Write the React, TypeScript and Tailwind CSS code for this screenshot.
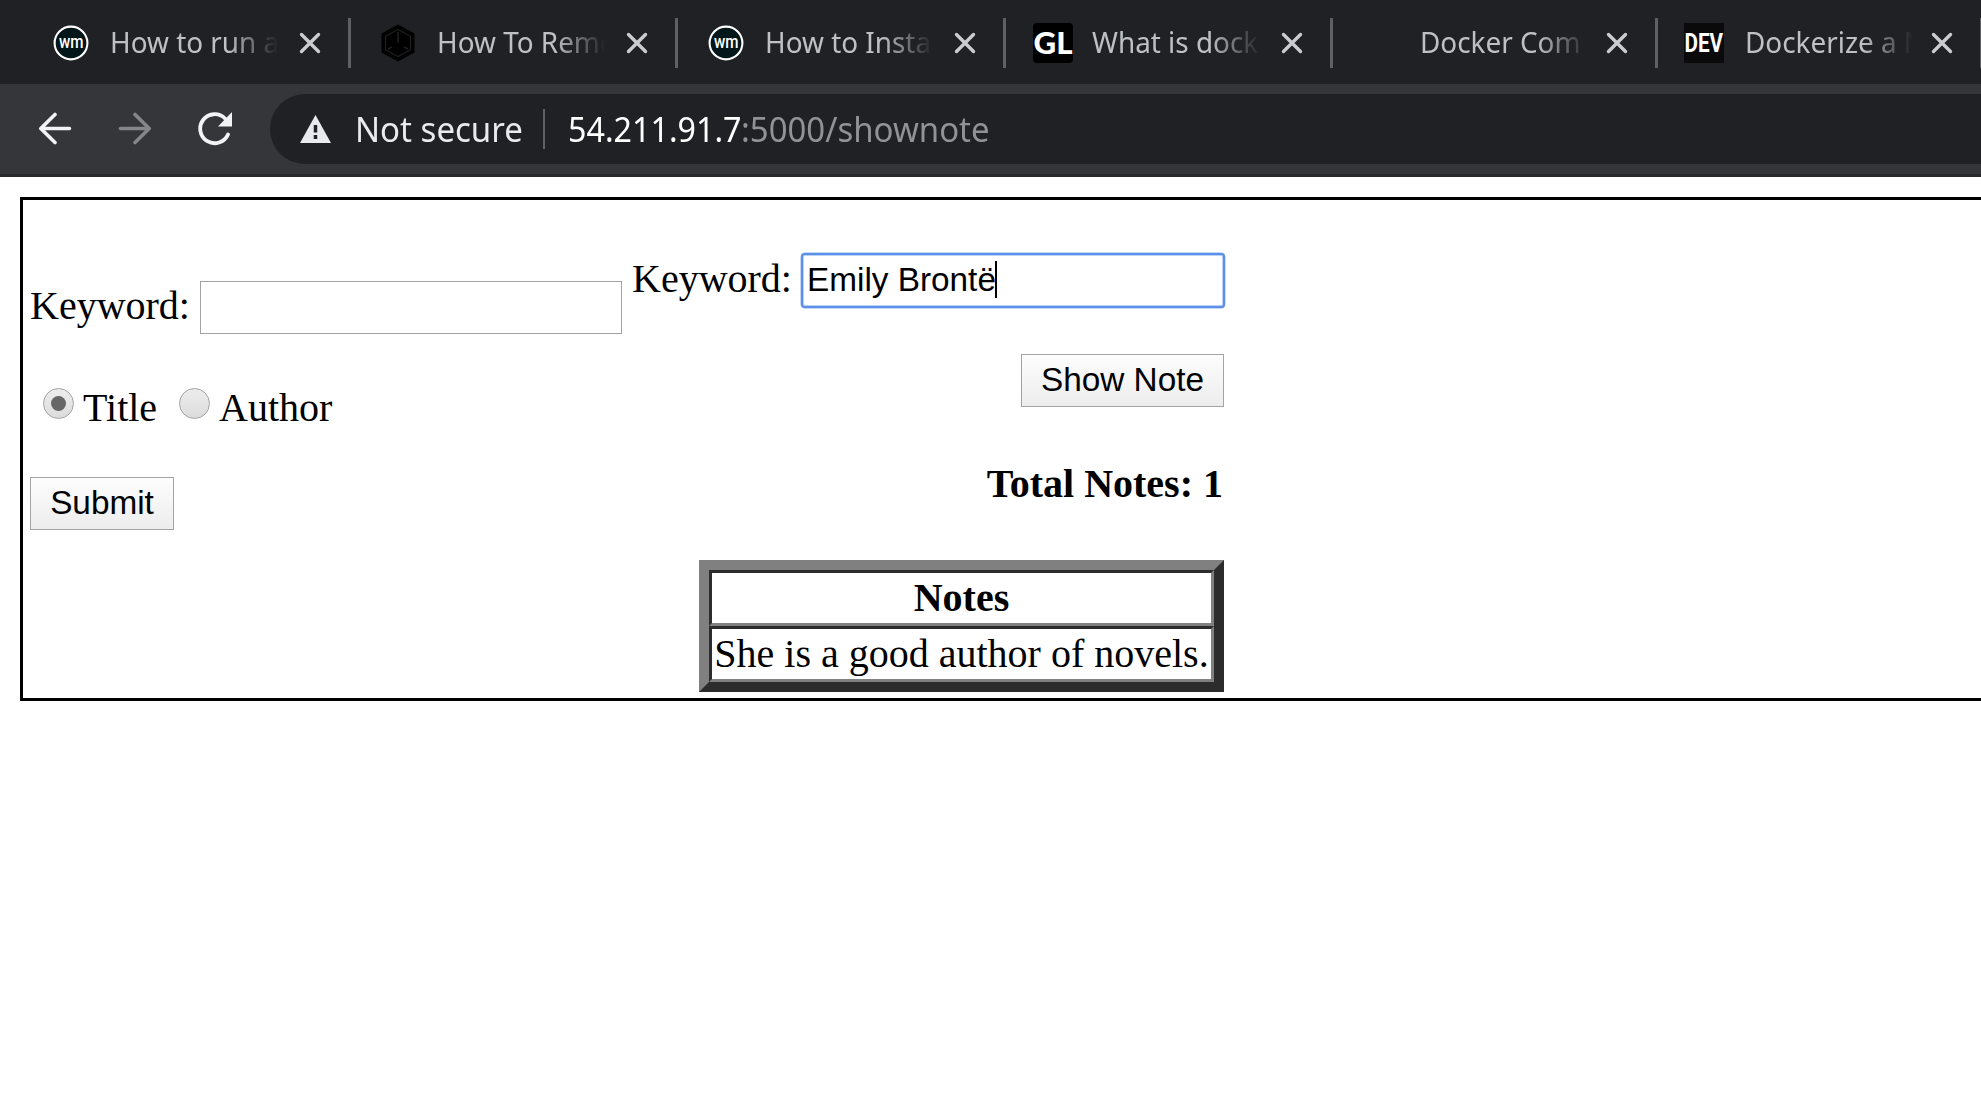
import React from "react";

function WmIcon() {
  return (
    <svg viewBox="0 0 36 36" className="mr-px size-9">
      <circle cx="18" cy="18" r="16.4" fill="#03161a" stroke="#fff" strokeWidth="2.1" />
      <text x="6" y="22.5" textLength="24.5" lengthAdjust="spacingAndGlyphs" fontFamily="Roboto, sans-serif" fontWeight="500" fontSize="19" fill="#fff">wm</text>
    </svg>
  );
}

function HexIcon() {
  return (
    <svg viewBox="0 0 40 40" className="size-10">
      <path d="M20 1.5 36.5 10.5V29.5L20 38.5 3.5 29.5V10.5Z" fill="#000" />
      <path d="M20 6.5 32.5 13.3V26.7L20 33.5 7.5 26.7V13.3Z" fill="none" stroke="#1d1e20" strokeWidth="1.3" />
      <path d="M20 9V20M10 26l4-2M30 26l-4-2" stroke="#1d1e20" strokeWidth="1.6" />
    </svg>
  );
}

function GlIcon() {
  return (
    <svg viewBox="0 0 40 40" className="size-10">
      <rect width="40" height="40" rx="4" fill="#000" />
      <text x="0.5" y="31" textLength="39" lengthAdjust="spacingAndGlyphs" fontFamily="Lato, sans-serif" fontWeight="900" fontSize="30" fill="#fff">GL</text>
    </svg>
  );
}

function DevIcon() {
  return (
    <svg viewBox="0 0 40 40" className="size-10">
      <rect width="40" height="40" fill="#0a0a0b" />
      <text x="0.5" y="29" textLength="38.5" lengthAdjust="spacingAndGlyphs" fontFamily="Roboto, sans-serif" fontWeight="700" fontSize="26" fill="#fff">DEV</text>
    </svg>
  );
}

function CloseIcon() {
  return (
    <svg viewBox="0 0 22 22" className="mb-px size-[22px] shrink-0">
      <path d="M2.5 2.5 19.5 19.5M19.5 2.5 2.5 19.5" stroke="#c9ccd1" strokeWidth="3.4" strokeLinecap="round" />
    </svg>
  );
}

const wide = "ml-[19px] w-[170px]";
const narrow = "ml-[21px] w-[167px]";

const tabs = [
  { title: "How to run a", icon: <WmIcon />, width: "w-[303px]", text: wide },
  { title: "How To Remo", icon: <HexIcon />, width: "w-[327px]", text: wide },
  { title: "How to Insta", icon: <WmIcon />, width: "w-[328px]", text: wide },
  { title: "What is docke", icon: <GlIcon />, width: "w-[327px]", text: wide },
  { title: "Docker Com", icon: null, width: "w-[325px]", text: narrow },
  { title: "Dockerize a N", icon: <DevIcon />, width: "w-[325px]", text: narrow },
];

function Tab({ title, icon, width, text }: (typeof tabs)[number]) {
  return (
    <div className={`flex h-[50px] shrink-0 items-center border-r-3 border-[#5f6063] pr-[27px] ${width}`}>
      <div className="ml-auto flex w-10 shrink-0 justify-center pb-px">{icon}</div>
      <div className={`mr-[19px] shrink-0 overflow-hidden whitespace-nowrap pb-[3px] text-[29.5px] leading-10 text-[#bdc1c6] [mask-image:linear-gradient(to_right,#000_118px,transparent_168px)] ${text}`}>
        <span className="inline-block origin-left scale-x-[0.945]">{title}</span>
      </div>
      <CloseIcon />
    </div>
  );
}

function Toolbar() {
  return (
    <div className="flex h-[93px] border-b-3 border-[#28292c] bg-[#35363a] pt-[10px]">
      <div className="flex h-[70px] w-[270px] shrink-0 items-center pl-[38px]">
        <svg viewBox="0 0 34 34" className="size-[34px]" fill="none" stroke="#f1f3f4" strokeWidth="3.6" strokeLinecap="round" strokeLinejoin="round">
          <path d="M31.5 16.5H3M17 2.5 2.8 16.5 17 30.5" />
        </svg>
        <svg viewBox="0 0 34 34" className="ml-[46px] size-[34px]" fill="none" stroke="#85868a" strokeWidth="3.6" strokeLinecap="round" strokeLinejoin="round">
          <path d="M2.5 16.5H31M17 2.5 31.2 16.5 17 30.5" />
        </svg>
        <svg viewBox="0 0 36 34" className="ml-[45px] h-[34px] w-9">
          <path d="M31 22.5A14.5 14.5 0 1 1 28 6.5" fill="none" stroke="#f1f3f4" strokeWidth="3.8" strokeLinecap="round" />
          <path d="M35 0V14.5H21Z" fill="#f1f3f4" />
        </svg>
      </div>
      <div className="flex h-[70px] flex-1 items-center whitespace-nowrap rounded-l-full bg-[#202124] pl-[30px] text-[34.5px] leading-[48px]">
        <svg viewBox="0 0 31 28" className="h-7 w-[31px] shrink-0">
          <path d="M15.5 0 31 28H0Z" fill="#e8eaed" />
          <path d="M15.5 10V17.5M15.5 20V24" stroke="#202124" strokeWidth="3.5" />
        </svg>
        <div className="ml-6 w-[188px] shrink-0 text-[#e8eaed]">
          <span className="inline-block origin-left scale-x-[0.957]">Not secure</span>
        </div>
        <div className="mr-[23px] h-10 w-0.5 bg-[#5f6368]" />
        <div className="w-[173px] shrink-0 text-white">
          <span className="inline-block origin-left scale-x-[0.935]">54.211.91.7</span>
        </div>
        <div className="text-[#8f9296]">
          <span className="inline-block origin-left scale-x-[0.955]">:5000/shownote</span>
        </div>
      </div>
    </div>
  );
}

function Radio({ checked }: { checked?: boolean }) {
  return (
    <span className="mt-[3px] flex size-[31px] shrink-0 items-center justify-center rounded-full border border-[#a3a3a3] bg-linear-to-b from-[#ededed] to-[#dcdcdc]">
      {checked && <span className="size-[15px] rounded-full bg-[#666]" />}
    </span>
  );
}

const buttonClass =
  "h-[53px] border border-[#a3a3a3] bg-linear-to-b from-[#fdfdfd] to-[#ededed] pb-px text-center font-['Liberation_Sans',Arial,sans-serif] text-[33.33px] leading-[46px]";

export default function App() {
  return (
    <div className="h-[1109px] w-[1981px] overflow-hidden bg-white text-black">
      <header className="font-['Noto_Sans','Open_Sans',sans-serif]">
        <div className="flex h-[84px] bg-[#202124] pl-12 pt-[18px]">
          {tabs.map((tab, i) => (
            <Tab key={i} {...tab} />
          ))}
        </div>
        <Toolbar />
      </header>
      <main className="ml-5 mt-5 flex h-[504px] border-3 border-r-0 border-black pl-[7px] font-['Liberation_Serif','Times_New_Roman',serif] text-[40px] leading-[46px]">
        <form className="w-[602px] shrink-0 pt-[81px]">
          <label className="flex">
            <span className="w-[170px] shrink-0 pt-0.5">Keyword:</span>
            <input className="h-[53px] w-[422px] border border-[#a3a3a3] bg-white" />
          </label>
          <div className="mt-[51px] flex pl-[13px]">
            <Radio checked />
            <span className="w-[105px] pl-[9px]">Title</span>
            <Radio />
            <span className="pl-[9px]">Author</span>
          </div>
          <button type="button" className={`${buttonClass} mt-[46px] block w-36`}>Submit</button>
        </form>
        <section className="flex w-[593px] shrink-0 flex-col items-end pt-[53px]">
          <div className="flex h-[55px] w-full">
            <span className="w-[169px] shrink-0 pt-[3px]">Keyword:</span>
            <div className="flex h-[55px] w-[424px] items-center rounded-[4px] border-2 border-[#5b8fe8] bg-white pl-1 pb-0.5 font-['Liberation_Sans',Arial,sans-serif] text-[33.33px] leading-[46px] shadow-[0_0_0_0.5px_#8db3f0,inset_0_0_0_1px_#b9d3f8]">
              Emily Brontë
              <span className="-ml-px h-[37px] w-0.5 bg-black" />
            </div>
          </div>
          <div className="flex flex-col items-end pr-px">
            <button type="button" className={`${buttonClass} mt-[46px] w-[203px]`}>Show Note</button>
            <p className="mr-px mt-[54px] font-bold">Total Notes: 1</p>
            <table className="mt-[53px] w-[525px] border-separate border-spacing-0 border-10 border-t-[#808080] border-r-[#2c2c2c] border-b-[#2c2c2c] border-l-[#808080]">
              <tbody>
                <tr>
                  <th className="h-14 border-3 border-t-[#2c2c2c] border-r-[#808080] border-b-[#808080] border-l-[#2c2c2c] p-0 text-center font-bold">Notes</th>
                </tr>
                <tr>
                  <td className="h-14 whitespace-nowrap border-3 border-t-[#2c2c2c] border-r-[#808080] border-b-[#808080] border-l-[#2c2c2c] p-0 text-center">She is a good author of novels.</td>
                </tr>
              </tbody>
            </table>
          </div>
        </section>
      </main>
    </div>
  );
}
